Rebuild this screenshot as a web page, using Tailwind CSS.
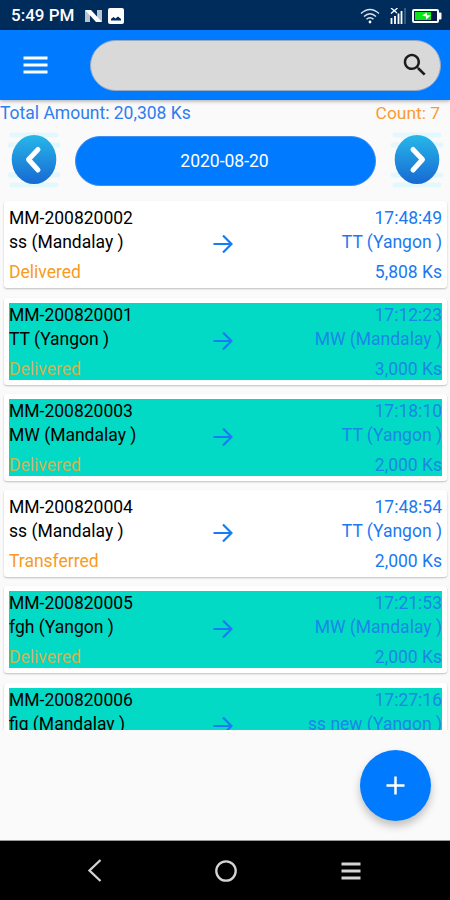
<!DOCTYPE html>
<html lang="en">
<head>
  <meta charset="UTF-8">
  <title>Orders</title>
  <script src="https://cdn.jsdelivr.net/npm/@tailwindcss/browser@4"></script>
</head>
<body class="bg-[#fafafa] font-['Roboto',sans-serif] text-[17.5px] text-black">
  <div class="relative w-[450px] h-[900px] flex flex-col overflow-hidden">

    <!-- Status bar -->
    <div class="h-[30px] shrink-0 bg-[#002c5c] flex items-center pl-[11px] pr-[8px] pt-[2px] text-white">
      <span class="w-[74px] text-[17px] font-medium whitespace-nowrap">5:49 PM</span>
      <svg class="w-[17px] h-[14px]" viewBox="0 0 17 14">
        <path d="M0 1l5 3v9H0zM12 1h5v12l-5-3z" fill="#b8c4d2"/>
        <path d="M0 1h6l11 12h-6z" fill="#fff"/>
      </svg>
      <svg class="w-4 h-4 ml-[6px]" viewBox="0 0 16 16">
        <rect width="16" height="16" rx="2" fill="#fff"/>
        <path d="M3 12.500v-1.500l2.500-2 2 1.500 2.500-2 3 2.500v1.500z" fill="#002c5c"/>
      </svg>
      <svg class="w-5 h-[16px] ml-auto" viewBox="0 0 20 16" fill="none" stroke="#dce4ee" stroke-width="1.500">
        <path d="M1 5.500q9-8 18 0M4 8.500q6-5.500 12 0M6.500 11.300q3.500-3.200 7 0"/>
        <circle cx="10" cy="14" r="1.400" fill="#fff" stroke="none"/>
      </svg>
      <svg class="w-4 h-4 ml-[10px]" viewBox="0 0 16 16" fill="none" stroke="#fff">
        <path d="M1.500 10v6M5 8v8M8.500 5.500v10.500M11.500 3v13" stroke-width="1.800"/>
        <path d="M15 0v16" stroke="#4d6b8d" stroke-width="1.500"/>
        <path d="M1 0l6 5M7.500 0L1 5.500" stroke-width="1.300"/>
      </svg>
      <svg class="w-[30px] h-[14px] ml-[6px]" viewBox="0 0 30 14">
        <rect x="1" y="1" width="25" height="12" rx="1" fill="#07194d" stroke="#fff" stroke-width="2"/>
        <path d="M27 3.500h1.500a1 1 0 0 1 1 1v5a1 1 0 0 1-1 1H27z" fill="#fff"/>
        <path d="M3 3h16v8H3z" fill="#0be31b"/>
        <path d="M10 6.500l5-3v2.700h4l-5 4.300V7.500z" fill="#fff"/>
      </svg>
    </div>

    <!-- Toolbar -->
    <header class="relative z-10 h-[70px] shrink-0 bg-[#007bff] flex items-center pl-[23px] pr-[9px] shadow-[0_1px_4px_rgba(0,0,0,0.35)]">
      <svg class="w-[25px] h-[18px]" viewBox="0 0 25 18" stroke="#fff" stroke-width="3">
        <path d="M0.500 2h24M0.500 9h24M0.500 16h24"/>
      </svg>
      <div class="w-[351px] h-[51px] ml-auto rounded-full bg-[#d9d9d9] border border-[#9aa9bf] flex items-center justify-end pr-[10px]">
        <svg class="w-[30px] h-[30px] -mt-px" viewBox="0 0 24 24" fill="#1c1c1c">
          <path d="M15.500 14h-.79l-.28-.27C15.410 12.590 16 11.110 16 9.500 16 5.910 13.090 3 9.500 3S3 5.910 3 9.500 5.910 16 9.500 16c1.610 0 3.090-.59 4.230-1.570l.27.28v.79l5 4.990L20.490 19l-4.990-5zm-6 0C7.010 14 5 11.990 5 9.500S7.010 5 9.500 5 14 7.010 14 9.500 11.990 14 9.500 14z"/>
        </svg>
      </div>
    </header>

    <!-- Totals -->
    <div class="h-[28px] shrink-0 flex justify-between pt-px pr-[10px] leading-6 whitespace-nowrap">
      <span class="text-[#2f7df0]">Total Amount: 20,308 Ks</span>
      <span class="text-[#f99b32] text-[17.4px]">Count: 7</span>
    </div>

    <!-- Date picker -->
    <div class="h-[66px] shrink-0 flex items-center px-[7px]">
      <svg class="w-[54px] h-[58px] -mt-[2px]" viewBox="0 0 54 58">
        <defs>
          <linearGradient id="ball" x1="0" y1="0" x2="0" y2="1">
            <stop offset="0" stop-color="#27b7e9"/>
            <stop offset="1" stop-color="#1769d2"/>
          </linearGradient>
        </defs>
        <path d="M5 4h44M3 14h48M3 44h48M5 54h44" stroke="#e3f8fc" stroke-width="5" stroke-linecap="round"/>
        <ellipse cx="27" cy="28.500" rx="22.300" ry="24.500" fill="url(#ball)"/>
        <path d="M31 18.500l-9.500 10 9.500 10.500" fill="none" stroke="#fff" stroke-width="5" stroke-linecap="round" stroke-linejoin="round"/>
      </svg>
      <div class="w-[301px] h-[50px] ml-[14px] rounded-full bg-[#007bff] border border-[#3d8ff2] text-white flex items-center justify-center pr-[2px] pt-px">2020-08-20</div>
      <svg class="w-[54px] h-[58px] ml-auto mr-[-1px] -mt-[2px]" viewBox="0 0 54 58">
        <path d="M5 4h44M3 14h48M3 44h48M5 54h44" stroke="#e3f8fc" stroke-width="5" stroke-linecap="round"/>
        <ellipse cx="27" cy="28.500" rx="22.300" ry="24.500" fill="url(#ball)"/>
        <path d="M23 18.500l9.500 10-9.500 10.500" fill="none" stroke="#fff" stroke-width="5" stroke-linecap="round" stroke-linejoin="round"/>
      </svg>
    </div>

    <div id="orders" class="h-[536px] shrink-0 overflow-hidden flex flex-col gap-[9.300px] px-1 pt-[7.300px]"></div>

    <div class="grow"></div>

    <!-- Add button -->
    <button class="absolute left-[360px] top-[750px] w-[71px] h-[71px] rounded-full bg-[#007bff] flex items-center justify-center shadow-[0_5px_9px_rgba(0,0,0,0.24)]">
      <svg class="w-[19px] h-[19px]" viewBox="0 0 20 20" stroke="#fff" stroke-width="2.600">
        <path d="M10 0.500v19M0.500 10h19"/>
      </svg>
    </button>

    <!-- Navigation bar -->
    <nav class="h-[60px] shrink-0 bg-black border-t border-[#9a9a9a] flex items-center justify-between pl-[87px] pr-[89px]">
      <svg class="w-[15px] h-[23px]" viewBox="0 0 15 23" fill="none" stroke="#d4d4d4" stroke-width="2.300">
        <path d="M13.500 1L2.500 11.500l11 10.500"/>
      </svg>
      <svg class="w-[22px] h-[22px] ml-[8px]" viewBox="0 0 22 22" fill="none" stroke="#d4d4d4" stroke-width="2.300">
        <circle cx="11" cy="11" r="9.700"/>
      </svg>
      <svg class="w-5 h-[18px]" viewBox="0 0 20 18" stroke="#d4d4d4" stroke-width="3.200">
        <path d="M0.500 2h19M0.500 9h19M0.500 16h19"/>
      </svg>
    </nav>
  </div>

  <script>
    const orders = [
      { id: 'MM-200820002', time: '17:48:49', from: 'ss (Mandalay )', to: 'TT (Yangon )', status: 'Delivered', amount: '5,808 Ks', paid: false },
      { id: 'MM-200820001', time: '17:12:23', from: 'TT (Yangon )', to: 'MW (Mandalay )', status: 'Delivered', amount: '3,000 Ks', paid: true },
      { id: 'MM-200820003', time: '17:18:10', from: 'MW (Mandalay )', to: 'TT (Yangon )', status: 'Delivered', amount: '2,000 Ks', paid: true },
      { id: 'MM-200820004', time: '17:48:54', from: 'ss (Mandalay )', to: 'TT (Yangon )', status: 'Transferred', amount: '2,000 Ks', paid: false },
      { id: 'MM-200820005', time: '17:21:53', from: 'fgh (Yangon )', to: 'MW (Mandalay )', status: 'Delivered', amount: '2,000 Ks', paid: true },
      { id: 'MM-200820006', time: '17:27:16', from: 'fig (Mandalay )', to: 'ss new (Yangon )', status: '', amount: '', paid: true }
    ];

    document.getElementById('orders').innerHTML = orders.map(o => `
      <div class="w-[443px] h-[87px] shrink-0 bg-white rounded-[3px] p-[5px] shadow-[0_1px_2px_rgba(0,0,0,0.24)]">
        <div class="h-[77px] leading-6 whitespace-nowrap ${o.paid ? 'bg-[#03dac5]' : ''}">
          <div class="flex justify-between">
            <span>${o.id}</span>
            <span class="${o.paid ? 'text-[#1788e6]' : 'text-[#1b79f2]'}">${o.time}</span>
          </div>
          <div class="grid grid-cols-[1fr_20px_1fr] items-center">
            <span>${o.from}</span>
            <svg class="w-5 h-5 relative left-[-3px] top-[2px]" viewBox="0 0 20 20" fill="none" stroke="#147cf5" stroke-width="2.200">
              <path d="M0.500 10h17.500M10 1.500l8.500 8.500-8.500 8.500"/>
            </svg>
            <span class="text-right ${o.paid ? 'text-[#1788e6]' : 'text-[#1b79f2]'}">${o.to}</span>
          </div>
          <div class="flex justify-between pt-[6px]">
            <span class="${o.paid ? 'text-[#d5b04f]' : 'text-[#f99b22]'}">${o.status}</span>
            <span class="${o.paid ? 'text-[#1788e6]' : 'text-[#1b79f2]'}">${o.amount}</span>
          </div>
        </div>
      </div>
    `).join('');
  </script>
</body>
</html>
